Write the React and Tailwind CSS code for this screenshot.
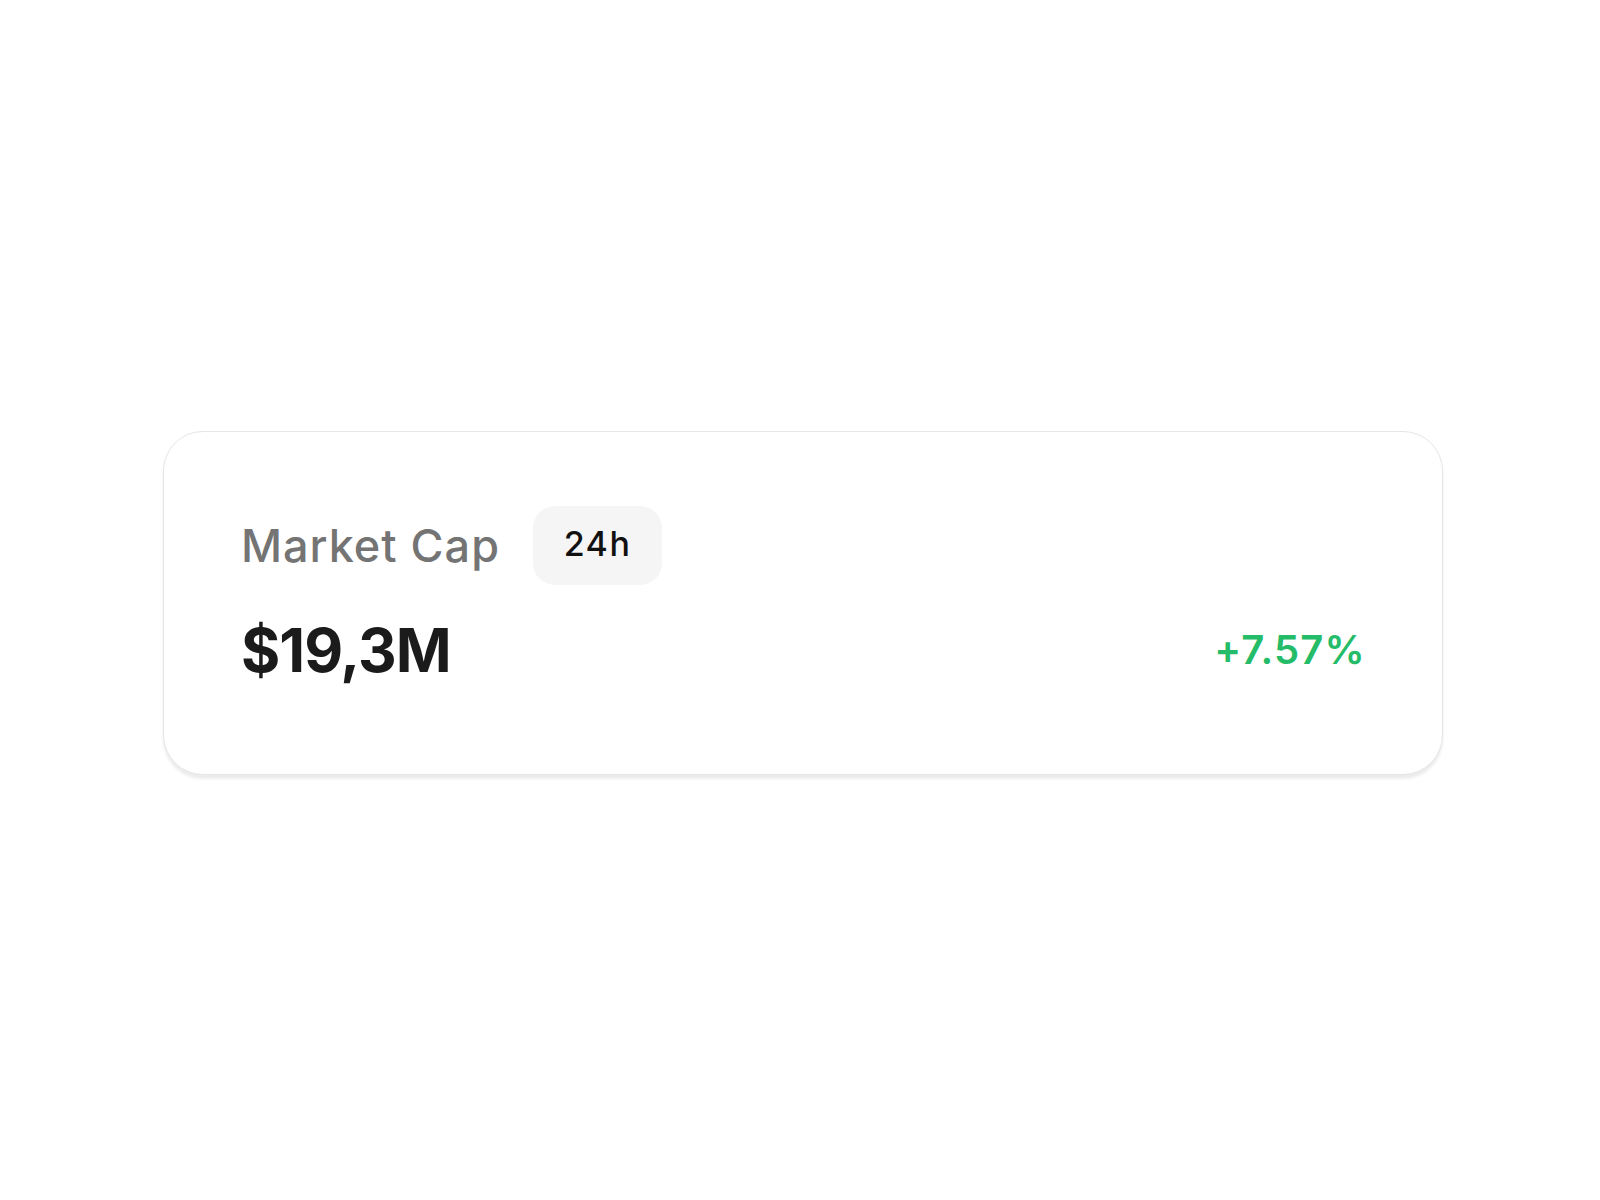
export default function App() {
  return (
    <div className="min-h-[1200px] w-full bg-white flex items-center justify-center font-['Inter','Liberation_Sans',sans-serif]">
      <div className="ml-[6px] mt-[6px] w-[1280px] h-[344px] rounded-[40px] border border-[#e6e6e6] bg-white shadow-[0_4px_3px_rgba(0,0,0,0.08)] pl-[77px] pr-[76px] pt-[74px] flex flex-col gap-[35px]">
        <div className="flex items-center">
          <span className="text-[45px] leading-none font-[450] text-[#747474] tracking-[1px]">Market Cap</span>
          <span className="ml-[33px] h-[79px] w-[129px] rounded-[22px] bg-[#f5f5f5] flex items-center justify-center text-[34px] font-[550] text-[#111] tracking-[1.5px] pb-[5px]">
            24h
          </span>
        </div>
        <div className="flex items-center justify-between">
          <span className="text-[60px] leading-none font-bold text-[#1b1b1b] tracking-[-1px]">$19,3M</span>
          <span className="text-[40px] leading-none font-semibold text-[#24bc68] tracking-[1.2px]">+7.57%</span>
        </div>
      </div>
    </div>
  );
}
